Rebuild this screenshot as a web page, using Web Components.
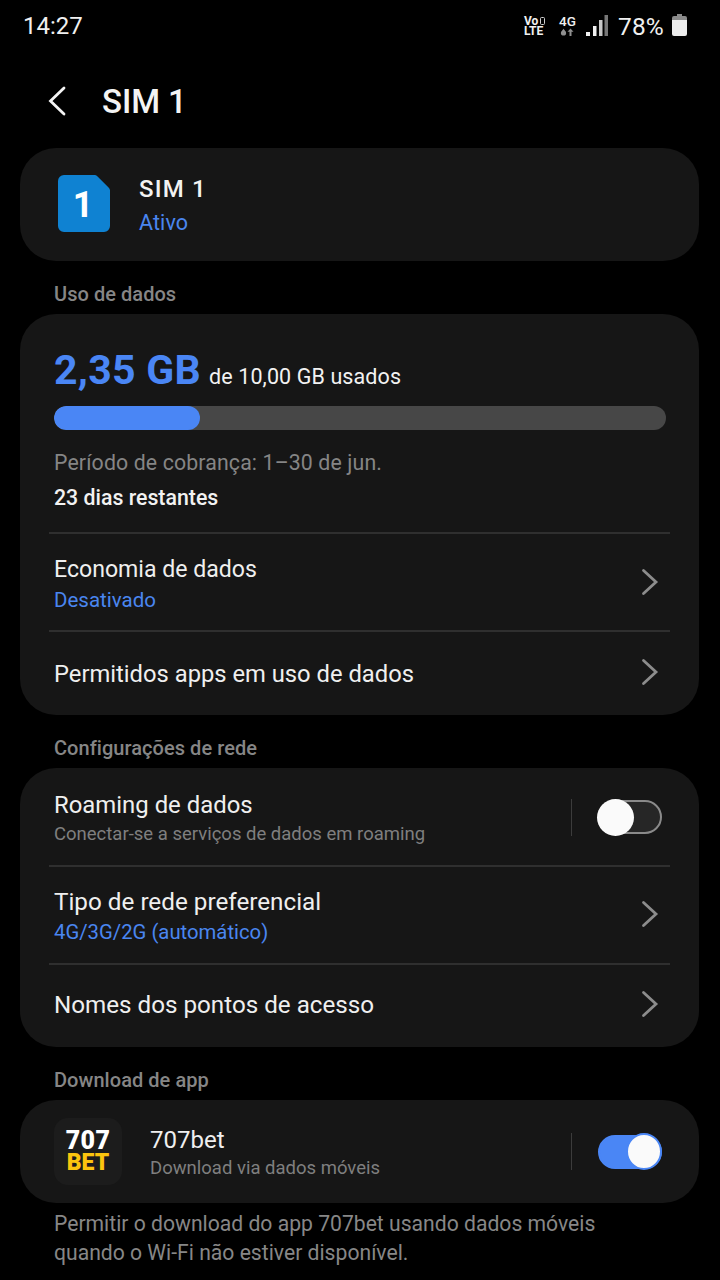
<!DOCTYPE html>
<html lang="pt"><head><meta charset="utf-8"><title>SIM 1</title>
<style>
html,body{margin:0;background:#000;}
body{font-family:Roboto,"Liberation Sans",sans-serif;color:#f2f2f2;width:720px;height:1280px;overflow:hidden;}
</style></head><body>
<phone-status></phone-status>
<page-header>SIM 1</page-header>
<main-list>
  <info-card style="height:113px">
    <sim-summary></sim-summary>
  </info-card>
  <section-label>Uso de dados</section-label>
  <info-card>
    <usage-panel></usage-panel>
    <list-row h="98" mt="4" sm="2" fs="23.1" cm="0" title="Economia de dados" sub="Desativado" blue arrow divider></list-row>
    <list-row h="84" mt="2" fs="23.75" cm="-2" title="Permitidos apps em uso de dados" arrow divider></list-row>
  </info-card>
  <section-label>Configurações de rede</section-label>
  <info-card>
    <list-row h="98" mt="3" sm="1" fs="23.9" title="Roaming de dados" sub="Conectar-se a serviços de dados em roaming" toggle="off"></list-row>
    <list-row h="98" mt="2" fs="24.25" cm="-2" ss="20.3" title="Tipo de rede preferencial" sub="4G/3G/2G (automático)" blue arrow divider></list-row>
    <list-row h="83" mt="-2" fs="24.2" cm="-3" title="Nomes dos pontos de acesso" arrow divider></list-row>
  </info-card>
  <section-label>Download de app</section-label>
  <info-card>
    <app-row></app-row>
  </info-card>
  <foot-note>Permitir o download do app 707bet usando dados móveis quando o Wi-Fi não estiver disponível.</foot-note>
</main-list>
<script>
function def(name, html){
  customElements.define(name, class extends HTMLElement{
    connectedCallback(){
      if(this.shadowRoot) return;
      const r=this.attachShadow({mode:'open'});
      r.innerHTML = typeof html==='function' ? html(this) : html;
    }
  });
}
const chev = `<svg width="18" height="28" viewBox="0 0 18 28" fill="none" style="display:block"><path d="M2.5 2.5 L15 14 L2.5 25.5" stroke="#8c8c8c" stroke-width="2.8" stroke-linecap="round"/></svg>`;

def('phone-status',`<style>
:host{display:flex;align-items:center;height:50px;padding:0 33px 0 23px;justify-content:space-between;color:#f0f0f0;box-sizing:border-box}
.t{font-size:24px;line-height:50px;margin-top:2px}
.r{display:flex;align-items:center;height:50px}
.stack{display:flex;flex-direction:column;align-items:flex-start;font-weight:700;line-height:10.500px}
.volte{position:relative;width:22px;font-size:12px;font-weight:700;line-height:10.500px;margin-top:2px;white-space:pre-line}
.pct{font-size:24.500px;margin:3px 0 0 9px;letter-spacing:.2px}
svg{display:block}
.cell{position:absolute;left:16px;top:1px;width:5px;height:8px;border:1px solid #d0d0d0;border-radius:1.500px;box-sizing:border-box}
</style>
<span class="t">14:27</span>
<div class="r">
 <div class="volte">Vo
LTE<span class="cell"></span></div>
 <div class="stack" style="width:19px;margin-left:12px;font-size:13.500px;font-weight:500;line-height:12px;align-items:center;margin-top:1px"><span>4G</span>
  <svg width="14" height="8" viewBox="0 0 14 8" fill="#8f8f8f" style="margin-top:1px"><circle cx="3.500" cy="5" r="2.600"/><path d="M3.500 .8 L5.500 3.500 H1.500Z"/><path d="M10.500 .5 L13.500 3.800 H11.500V8 H9.500V3.800 H7.500Z"/></svg></div>
 <svg style="margin-left:8px" width="24" height="24" viewBox="0 0 24 24"><path fill="#f0f0f0" d="M1 19h4v4H1zM8 13h3.500v10H8z"/><path fill="#c8c8c8" d="M14 7h3.500v16H14z"/><path fill="#777" d="M19.500 2h3.500v21h-3.500z"/></svg>
 <span class="pct">78%</span>
 <svg style="margin-left:8px" width="15" height="22" viewBox="0 0 15 22"><path fill="#8a8a8a" d="M5 0h5v2h3a2 2 0 0 1 2 2v3H0V4a2 2 0 0 1 2-2h3z"/><path fill="#ececec" d="M0 6h15v14a2 2 0 0 1-2 2H2a2 2 0 0 1-2-2z"/></svg>
</div>`);

def('page-header',`<style>
:host{display:flex;align-items:center;height:98px;box-sizing:border-box;padding:4px 0 0 48px;font-size:33px;font-weight:500;color:#f4f4f4;letter-spacing:-.1px}
svg{margin-right:36px;display:block}
</style><svg width="18" height="30" viewBox="0 0 18 30" fill="none"><path d="M16 2 L2.500 15 L16 28" stroke="#f4f4f4" stroke-width="2.800" stroke-linecap="round"/></svg><slot></slot>`);

def('main-list',`<style>:host{display:flex;flex-direction:column;padding:0 21px 0 20px}</style><slot></slot>`);
def('info-card',`<style>:host{display:flex;flex-direction:column;background:#161616;border-radius:36px;box-sizing:border-box;overflow:hidden}</style><slot></slot>`);
def('section-label',`<style>:host{display:block;height:53px;box-sizing:border-box;padding:22px 0 0 34px;font-size:20px;line-height:22px;font-weight:500;color:#868686;letter-spacing:.05px}</style><slot></slot>`);

def('sim-summary',`<style>
:host{display:flex;align-items:center;height:100%;padding:0 0 0 38px;box-sizing:border-box}
svg{display:block;margin:-2px 29px 0 0}
.a{font-size:24px;line-height:32px;font-weight:500;color:#f2f2f2;letter-spacing:1.200px}
.b{font-size:21.500px;line-height:28px;color:#4a86f0;margin-top:4px;letter-spacing:.1px}
.w{margin-top:1px}
text{font-family:Roboto,sans-serif}
</style>
<svg width="52" height="57" viewBox="0 0 52 57"><path fill="#0f82d2" d="M6 0H36.500a4 4 0 0 1 2.800 1.200L50.800 12.700a4 4 0 0 1 1.200 2.800V51a6 6 0 0 1-6 6H6a6 6 0 0 1-6-6V6a6 6 0 0 1 6-6z"/><text x="25" y="42" text-anchor="middle" font-size="36" font-weight="700" fill="#fff">1</text></svg>
<div class="w"><div class="a">SIM 1</div><div class="b">Ativo</div></div>`);

def('usage-panel',`<style>
:host{display:block;height:219px;box-sizing:border-box;padding:32px 33px 0 34px}
.top{display:flex;align-items:baseline;height:48px;line-height:48px}
.big{font-size:41px;font-weight:700;color:#4a86f5;letter-spacing:.3px}
.of{font-size:21.500px;margin-left:8px;color:#f2f2f2;font-weight:400;letter-spacing:.1px}
.bar{height:24px;border-radius:12px;background:#474747;margin-top:12px;overflow:hidden}
.fill{height:100%;width:146px;border-radius:12px;background:#4a86f5}
.p{font-size:21.300px;line-height:28px;color:#858585;margin-top:19px;letter-spacing:.13px}
.d{font-size:21.300px;line-height:28px;font-weight:500;color:#f2f2f2;margin-top:7px}
</style>
<div class="top"><span class="big">2,35 GB</span><span class="of">de 10,00 GB usados</span></div>
<div class="bar"><div class="fill"></div></div>
<div class="p">Período de cobrança: 1–30 de jun.</div>
<div class="d">23 dias restantes</div>`);

const toggle = on => `<div class="sep"></div><div class="sw ${on?'on':''}"><div class="k"></div></div>`;
const swCss = `.sep{width:1px;height:37px;background:#3c3c3c;margin-right:26px}
.sw{width:64px;height:34px;box-sizing:border-box;border-radius:17px;border:2px solid #8a8a8a;background:#262626;position:relative;flex:none}
.sw.on{background:#4a86f5;border-color:#4a86f5}
.k{position:absolute;width:37px;height:37px;border-radius:50%;background:#fafafa;top:-3.500px;left:-3px}
.sw.on .k{left:26px;width:32px;height:33px;top:-3.500px;border:2px solid #4a86f5;box-sizing:content-box}`;

def('list-row', el => {
  const a=n=>el.getAttribute(n);
  const sub=a('sub'), blue=el.hasAttribute('blue'), tg=a('toggle');
  return `<style>
:host{display:flex;align-items:center;position:relative;box-sizing:border-box;height:${a('h')}px;padding:0 37px 0 34px}
.div{position:absolute;left:29px;right:29px;top:-1px;height:2px;background:#2f2f2f}
.txt{flex:1;min-width:0;margin-top:${a('mt')||0}px}
.t{font-size:${a('fs')||24}px;line-height:30px;color:#efefef}
.s{font-size:${a('ss')||(blue?'20.5':'18.5')}px;line-height:26px;margin-top:${a('sm')||2}px;color:${blue?'#4a86f0':'#7f7f7f'}}
.chev{display:block;margin:${a('cm')||0}px 3px 0 0}
${swCss}
</style>
${el.hasAttribute('divider')?'<div class="div"></div>':''}
<div class="txt"><div class="t">${a('title')}</div>${sub?`<div class="s">${sub}</div>`:''}</div>
${el.hasAttribute('arrow')?`<span class="chev">${chev}</span>`:''}
${tg?toggle(tg==='on'):''}`;
});

def('app-row',`<style>
:host{display:flex;align-items:center;height:103px;box-sizing:border-box;padding:0 37px 0 34px}
.ic{width:68px;height:67px;border-radius:14px;background:#1c1c1c;display:flex;align-items:center;justify-content:center;margin-right:28px}
.logo{font-family:Roboto,sans-serif;font-weight:900;font-size:23px;line-height:21.500px;color:#fcc40e;text-align:center;white-space:pre-line}
.logo::first-line{font-size:25px;color:#fff;letter-spacing:.4px}
.txt{flex:1;margin-top:4px}
.t{font-size:24px;line-height:30px;color:#efefef;margin-top:-2px}
.s{font-size:18.500px;line-height:26px;margin-top:0;color:#7f7f7f}
${swCss}
</style>
<div class="ic"><div class="logo">707
BET</div></div>
<div class="txt"><div class="t">707bet</div><div class="s">Download via dados móveis</div></div>
${toggle(true)}`);

def('foot-note',`<style>:host{display:block;padding:6px 60px 0 34px;font-size:21.150px;line-height:29px;color:#878787}</style><slot></slot>`);
</script>
</body></html>
